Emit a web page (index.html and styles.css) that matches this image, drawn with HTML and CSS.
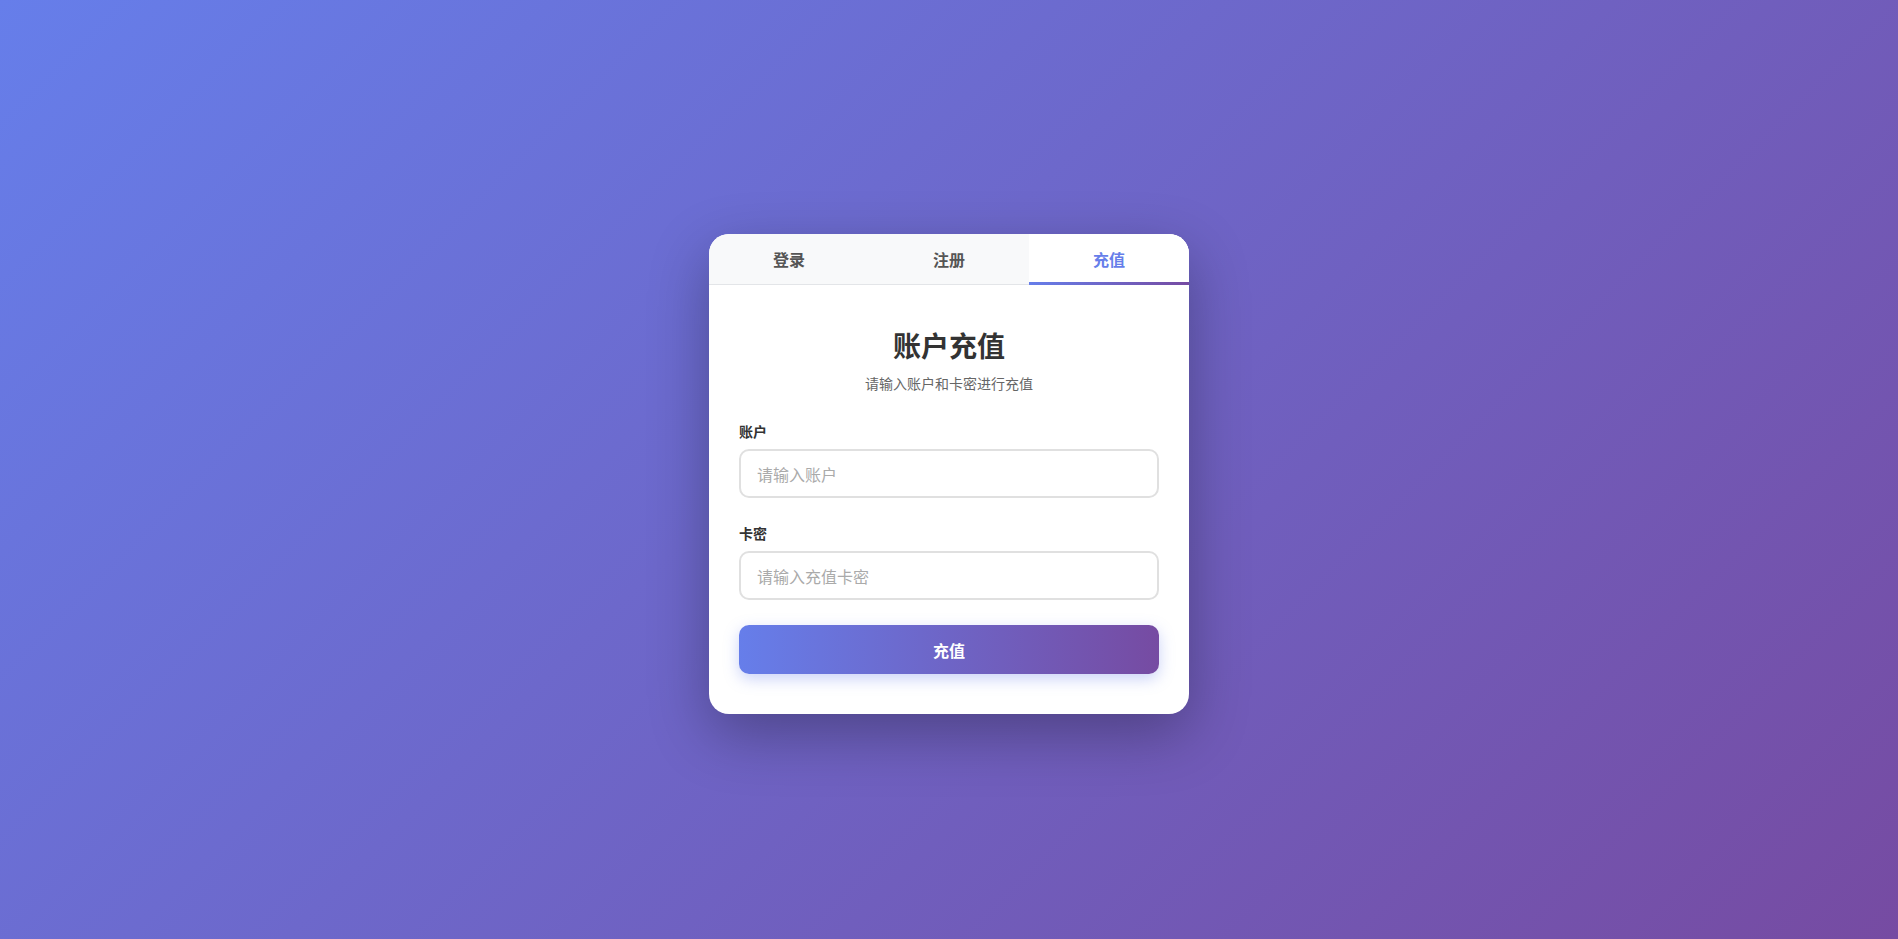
FILE: index.html
```html
<!DOCTYPE html>
<html lang="zh-CN">
<head>
<meta charset="UTF-8">
<title>账户充值</title>
<link rel="stylesheet" href="styles.css">
</head>
<body>
<div class="card">
  <div class="tabs">
    <div class="tab">登录</div>
    <div class="tab">注册</div>
    <div class="tab active">充值</div>
  </div>
  <div class="card-body">
    <div class="header">
      <h2 class="title">账户充值</h2>
      <p class="subtitle">请输入账户和卡密进行充值</p>
    </div>
    <div class="form-group">
      <label class="label">账户</label>
      <input class="input" type="text" placeholder="请输入账户">
    </div>
    <div class="form-group">
      <label class="label">卡密</label>
      <input class="input" type="text" placeholder="请输入充值卡密">
    </div>
    <button class="btn">充值</button>
  </div>
</div>
</body>
</html>
```

FILE: styles.css
```css
* { box-sizing: border-box; }
html, body { margin: 0; padding: 0; }
body {
  height: 100vh;
  padding-top: 9px;
  display: flex;
  align-items: center;
  justify-content: center;
  background: linear-gradient(135deg, #667eea 0%, #764ba2 100%);
  font-family: "Noto Sans CJK SC", "Noto Sans", "Liberation Sans", sans-serif;
}
.card {
  width: 480px;
  background: #fff;
  border-radius: 20px;
  overflow: hidden;
  box-shadow: 0 20px 60px rgba(0, 0, 0, 0.3);
}
.tabs {
  display: flex;
  background: #f8f9fa;
  border-bottom: 1px solid #e3e5e8;
}
.tab {
  flex: 1;
  position: relative;
  height: 50px;
  display: flex;
  align-items: center;
  justify-content: center;
  font-size: 16px;
  font-weight: 600;
  color: #555;
}
.tab.active {
  background: #fff;
  color: #667eea;
}
.tab.active::after {
  content: "";
  position: absolute;
  left: 0;
  right: 0;
  bottom: -1px;
  height: 3px;
  background: linear-gradient(90deg, #667eea, #764ba2);
}
.card-body {
  padding: 40px 30px;
}
.header {
  text-align: center;
  margin-bottom: 28px;
}
.title {
  margin: 0 0 8px;
  font-size: 28px;
  font-weight: 700;
  color: #333;
  line-height: 40px;
}
.subtitle {
  margin: 0;
  font-size: 14px;
  color: #666;
  line-height: 20px;
}
.form-group {
  margin-bottom: 25px;
}
.label {
  display: block;
  font-size: 14px;
  font-weight: 600;
  color: #333;
  line-height: 20px;
  margin-bottom: 8px;
}
.input {
  display: block;
  width: 100%;
  height: 49px;
  padding: 0 16px;
  border: 2px solid #e0e0e0;
  border-radius: 10px;
  font-family: inherit;
  font-size: 16px;
  color: #333;
  outline: none;
}
.input::placeholder { color: #aaa; }
.btn {
  display: block;
  width: 100%;
  height: 49px;
  border: none;
  border-radius: 10px;
  background: linear-gradient(90deg, #667eea, #764ba2);
  color: #fff;
  font-family: inherit;
  font-size: 16px;
  font-weight: 700;
  box-shadow: 0 5px 15px rgba(102, 126, 234, 0.35);
  cursor: pointer;
}
```
